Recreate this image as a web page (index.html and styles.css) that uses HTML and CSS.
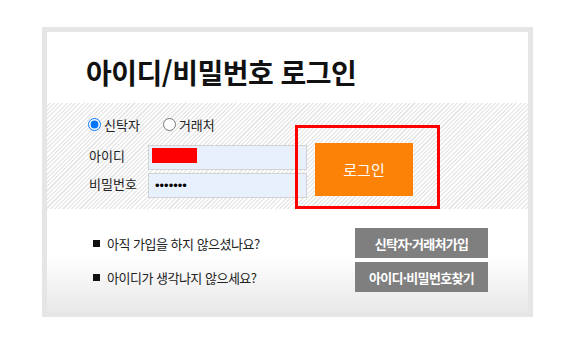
FILE: index.html
```html
<!DOCTYPE html>
<html lang="ko">
<head>
<meta charset="utf-8">
<title>아이디/비밀번호 로그인</title>
<link rel="stylesheet" href="styles.css">
</head>
<body>
<div class="box">
  <h1 class="title">아이디/비밀번호 로그인</h1>
  <form class="form">
    <div class="types">
      <label class="type"><input type="radio" name="type" checked> 신탁자</label>
      <label class="type"><input type="radio" name="type"> 거래처</label>
    </div>
    <label class="lbl lbl-id">아이디</label>
    <div class="field field-id"><input class="inp" type="text"><span class="redact"></span></div>
    <label class="lbl lbl-pw">비밀번호</label>
    <div class="field field-pw"><input class="inp pw" type="password" value="1234567"></div>
    <button type="button" class="login">로그인</button>
    <div class="mark"></div>
  </form>
  <div class="links">
    <div class="row"><span class="q"><span class="sq"></span>아직 가입을 하지 않으셨나요?</span><a class="btn">신탁자·거래처가입</a></div>
    <div class="row"><span class="q"><span class="sq"></span>아이디가 생각나지 않으세요?</span><a class="btn">아이디·비밀번호찾기</a></div>
  </div>
</div>
</body>
</html>
```
FILE: styles.css
```css
* { box-sizing: border-box; }
body {
  margin: 0;
  background: #fff;
  font-family: "Noto Sans CJK KR", "Noto Sans", sans-serif;
  color: #222;
}
.box {
  margin: 27px 0 0 42px;
  width: 491px;
  height: 290px;
  border: 5px solid #e5e5e5;
  background: #fff;
  display: flex;
  flex-direction: column;
}
.title {
  margin: 0;
  height: 71px;
  padding: 23px 0 0 39px;
  font-size: 28px;
  line-height: 34px;
  font-weight: 700;
  color: #111;
  letter-spacing: -0.5px;
}
.form {
  position: relative;
  height: 106px;
  margin: 0;
  padding: 11px 0 0 41px;
  background: repeating-linear-gradient(135deg, #ffffff 0 1.5px, #e9e9e9 1.5px 3px);
  display: grid;
  grid-template-columns: 60px 159px 106px;
  grid-template-rows: 26px 25px 25px;
  row-gap: 3px;
  align-content: start;
}
.types {
  grid-column: 1 / 4;
  align-self: start;
  height: 20px;
  display: flex;
  align-items: center;
  gap: 23px;
  font-size: 13px;
}
.type { display: flex; align-items: center; gap: 3px; }
.type input { margin: 0; width: 13px; height: 13px; }
.lbl {
  font-size: 13px;
  display: flex;
  align-items: center;
  padding-left: 1px;
  color: #222;
}
.field { position: relative; }
.inp {
  width: 159px;
  height: 25px;
  margin: 0;
  border: 1px solid #d2d2d2;
  background: #e8f0fe;
  padding: 0 6px;
  font-family: "Liberation Sans", sans-serif;
  font-size: 13px;
  outline: none;
}
.redact {
  position: absolute;
  left: 4px;
  top: 5px;
  width: 45px;
  height: 15px;
  background: #ff0000;
}
.login {
  grid-column: 3;
  grid-row: 2 / 4;
  margin: 0 0 0 8px;
  width: 98px;
  height: 53px;
  border: 0;
  background: #fb8206;
  color: #fff;
  font-family: "Noto Sans CJK KR", sans-serif;
  font-size: 15px;
  padding: 0;
}
.mark {
  position: absolute;
  left: 248px;
  top: 22px;
  width: 145px;
  height: 84px;
  border: 3px solid #ff0000;
}
.links {
  flex: 1;
  padding: 19px 40px 0 46px;
  display: flex;
  flex-direction: column;
  gap: 4px;
  background: linear-gradient(to bottom, #fff 45%, #e8e8e8 100%);
}
.row {
  display: flex;
  justify-content: space-between;
  align-items: center;
  height: 30px;
}
.q {
  display: flex;
  align-items: center;
  font-size: 13px;
  letter-spacing: -0.5px;
  color: #222;
}
.sq {
  width: 7px;
  height: 7px;
  background: #111;
  margin-right: 7px;
}
.btn {
  width: 133px;
  height: 30px;
  background: #7f7f7f;
  color: #fff;
  font-size: 13px;
  font-weight: 700;
  letter-spacing: -0.7px;
  display: flex;
  align-items: center;
  justify-content: center;
}
```
